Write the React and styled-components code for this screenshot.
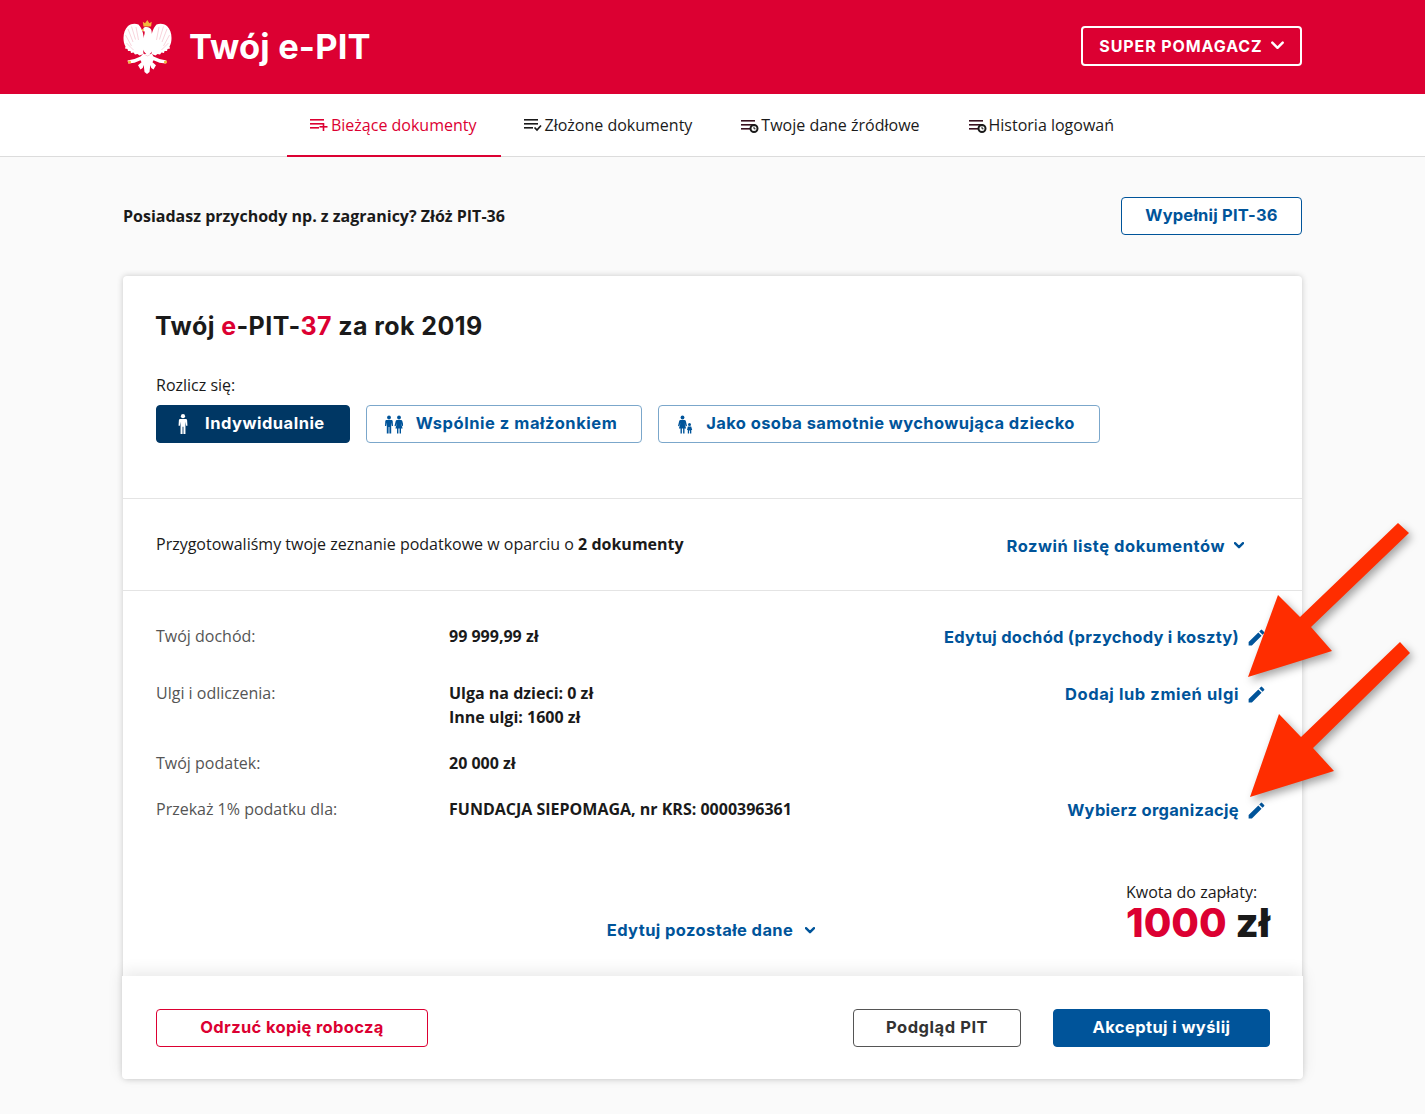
import React from "react";
import styled, { createGlobalStyle } from "styled-components";
import { MdEdit } from "react-icons/md";

const Global = createGlobalStyle`
  html, body { margin: 0; padding: 0; background: #fafafa; }
  body { font-family: "Open Sans", "Liberation Sans", sans-serif; color: #1a1a1a; font-size: 16px; }
  * { box-sizing: border-box; }
`;
const HEAD = `"Inter", "Liberation Sans", sans-serif`;
const BLUE = "#00549a";
const RED = "#dc0032";

const Page = styled.div`position: relative; width: 1425px; height: 1114px; overflow: hidden;`;
const Header = styled.header`
  height: 94px; background: ${RED}; padding: 0 123px;
  display: flex; align-items: center; justify-content: space-between;
`;
const Brand = styled.div`display: flex; align-items: center; gap: 16px;`;
const BrandName = styled.div`
  font-family: ${HEAD}; font-weight: 700; font-size: 34.5px; letter-spacing: .15px; color: #fff; line-height: 1;
`;
const UserButton = styled.button`
  width: 221px; height: 40px; margin-top: -2px; border: 2px solid #fff; border-radius: 4px; background: transparent; color: #fff;
  font-family: ${HEAD}; font-weight: 700; font-size: 16px; letter-spacing: .9px; display: flex; align-items: center; justify-content: center; gap: 8px; padding: 0;
`;
const Nav = styled.nav`
  height: 63px; background: #fff; border-bottom: 1px solid #dcdcdc;
  display: flex; justify-content: center;
`;
const Tab = styled.a`
  height: 63px; padding: 0 24px 0 23px; display: flex; align-items: center; gap: 2px; font-size: 16px; white-space: nowrap;
  color: ${p => (p.$active ? RED : "#1a1a1a")};
  border-bottom: 2px solid ${p => (p.$active ? RED : "transparent")};
`;
const Main = styled.main`padding: 39px 123px 0;`;
const Notice = styled.div`display: flex; align-items: center; justify-content: space-between; height: 39px; margin-bottom: 41px;`;
const NoticeText = styled.div`font-weight: 700; font-size: 16px;`;
const OutlineButton = styled.button`
  height: 38px; width: 181px; background: #fff; border: 1px solid ${BLUE}; border-radius: 4px; color: ${BLUE};
  font-family: ${HEAD}; font-weight: 700; font-size: 16.5px; letter-spacing: .2px; padding: 0 0 2px;
`;
const Card = styled.section`
  background: #fff; border-radius: 4px; box-shadow: 0 0 6px rgba(0,0,0,.2); height: 803px; display: flex; flex-direction: column;
`;
const Top = styled.div`padding: 33px 33px 0; height: 223px; border-bottom: 1px solid #e4e4e4;`;
const Title = styled.h1`
  margin: 0 0 0 -1px; font-family: ${HEAD}; font-weight: 700; font-size: 25px; letter-spacing: .42px; line-height: 34px; color: #1a1a1a;
  span { color: ${RED}; }
`;
const ChooseLabel = styled.div`margin-top: 30px; line-height: 24px; font-size: 16px;`;
const Choices = styled.div`display: flex; gap: 16px; margin-top: 8px;`;
const Choice = styled.button`
  height: 38px; padding: 0 24px 2px ${p => p.$pad}px; display: flex; align-items: center; gap: ${p => p.$gap}px; border-radius: 4px;
  border: 1px solid ${p => (p.$active ? "#003764" : "#7ba7cb")};
  background: ${p => (p.$active ? "#003764" : "#fff")};
  color: ${p => (p.$active ? "#fff" : BLUE)};
  font-family: ${HEAD}; font-weight: 700; font-size: 16.5px; letter-spacing: ${p => p.$ls}px;
  svg { margin-top: 2px; }
`;
const Docs = styled.div`
  height: 92px; border-bottom: 1px solid #e4e4e4; padding: 0 58px 2px 33px; display: flex; align-items: center; justify-content: space-between;
`;
const LinkText = styled.a`
  font-family: ${HEAD}; font-weight: 700; font-size: 16.5px; letter-spacing: ${p => p.$ls ?? 0.4}px; color: ${BLUE};
  display: inline-flex; align-items: center; gap: ${p => p.$gap || 10}px; white-space: nowrap; line-height: 24px;
`;
const DocsLink = styled(LinkText)`margin-top: 4px;`;
const RowLink = styled(LinkText)`align-self: start; margin: 1px 2px -1px 0; gap: 7px;`;
const Rows = styled.div`padding: 33px 33px 0; flex: 1;`;
const Row = styled.div`
  display: grid; grid-template-columns: 293px 1fr auto; margin-bottom: ${p => p.$after}px; line-height: 24px;
`;
const Label = styled.div`color: #555; font-size: 16px;`;
const Value = styled.div`font-weight: 700; font-size: 16px;`;
const Bottom = styled.div`
  display: grid; grid-template-columns: 1fr auto 1fr; align-items: start; margin-top: 59px;
`;
const CenterLink = styled.div`grid-column: 2; padding-top: 38px; margin-left: -3px; line-height: 24px;`;
const Amount = styled.div`grid-column: 3; justify-self: end; margin-right: -1px;`;
const AmountLabel = styled.div`font-size: 16px; line-height: 24px;`;
const AmountValue = styled.div`
  font-family: ${HEAD}; font-weight: 800; font-size: 40px; line-height: 38px; white-space: nowrap;
  span { color: ${RED}; }
`;
const Footer = styled.div`
  height: 103px; margin: 0 -1px; background: #fff; border-radius: 0 0 4px 4px; padding: 0 33px 0 34px; display: flex; align-items: center; justify-content: space-between;
  box-shadow: 0 -4px 16px rgba(0,0,0,.09); position: relative;
`;
const Danger = styled.button`
  width: 272px; height: 38px; background: #fff; border: 1px solid ${RED}; border-radius: 4px; color: ${RED};
  font-family: ${HEAD}; font-weight: 700; font-size: 16.5px; letter-spacing: .35px; padding: 0 0 2px;
`;
const Actions = styled.div`display: flex; gap: 32px;`;
const Preview = styled.button`
  width: 168px; height: 38px; background: #fff; border: 1px solid #555; border-radius: 4px; color: #333;
  font-family: ${HEAD}; font-weight: 700; font-size: 16.5px; letter-spacing: .55px; padding: 0 0 2px;
`;
const Submit = styled.button`
  width: 217px; height: 38px; background: ${BLUE}; border: 1px solid ${BLUE}; border-radius: 4px; color: #fff;
  font-family: ${HEAD}; font-weight: 700; font-size: 16.5px; letter-spacing: .4px; padding: 0 0 2px;
`;
const Arrows = styled.svg`position: absolute; left: 1230px; top: 510px; overflow: visible; filter: drop-shadow(3px 4px 4px rgba(0,0,0,.35));`;

const Pencil = styled(MdEdit)`color: ${BLUE}; width: 21px; height: 21px; flex: none;`;

const Chevron = ({ size = 10, w = 2.4, color = "currentColor" }) => (
  <svg width={size} height={size * 0.7} viewBox="0 0 10 7" fill="none">
    <path d="M1 1.2 5 5.2 9 1.2" stroke={color} strokeWidth={w} strokeLinecap="round" strokeLinejoin="round" />
  </svg>
);

const Lines = ({ x = 0 }) => (
  <g transform={`translate(${x} 0)`}>
    <rect x="0" y="1" width="14" height="1.6" />
    <rect x="0" y="5" width="14" height="1.6" />
    <rect x="0" y="9" width="9" height="1.6" />
  </g>
);
const IconAdd = () => (
  <svg width="19" height="14" viewBox="0 0 19 14" fill={RED}><Lines /><rect x="9.500" y="8" width="8" height="1.6" /><rect x="12.700" y="5" width="1.6" height="8" /></svg>
);
const IconDone = () => (
  <svg width="19" height="14" viewBox="0 0 19 14" fill="#1a1a1a"><Lines /><path d="M10.5 9.5 13 12l4-4.5" fill="none" stroke="#1a1a1a" strokeWidth="1.7" /></svg>
);
const IconClock = () => (
  <svg width="20" height="14" viewBox="0 0 20 14" fill="#3a1220" style={{ marginTop: 2 }}>
    <Lines x={2} />
    <circle cx="15" cy="9.500" r="3.500" fill="#fff" stroke="#1a1a1a" strokeWidth="2" />
    <path d="M15 7.600v2.200h1.500" fill="none" stroke="#1a1a1a" strokeWidth="1" />
  </svg>
);
const Adult = ({ x = 0, c }) => (
  <g fill={c} transform={`translate(${x} 0)`}>
    <circle cx="4" cy="2" r="1.9" />
    <path d="M1.600 4.400h4.800c.7 0 1.200.5 1.300 1.200l.3 5H6.800L6.200 7v11H4.400v-6.500h-.8V18H1.800V7l-.6 3.600H0l.3-5c.1-.7.6-1.200 1.300-1.200z" />
  </g>
);
const Woman = ({ x = 0, c }) => (
  <g fill={c} transform={`translate(${x} 0)`}>
    <circle cx="4" cy="2" r="1.9" />
    <path d="M2 4.400h4c.7 0 1.100.4 1.300 1l1.200 5-1.100.3L6 7.400 7.600 13H6v5H4.600v-5H3.400v5H2v-5H.4L2 7.400.6 10.700l-1.100-.3 1.200-5c.2-.6.600-1 1.300-1z" />
  </g>
);
const IconSingle = () => (
  <svg width="10" height="20" viewBox="0 0 8 18"><Adult c="#fff" /></svg>
);
const IconCouple = () => (
  <svg width="18" height="19" viewBox="0 0 18 18"><Adult c={BLUE} /><Woman x={10} c={BLUE} /></svg>
);
const IconParent = () => (
  <svg width="15" height="19" viewBox="0 0 15 18">
    <Woman x={0.5} c={BLUE} />
    <g fill={BLUE}>
      <circle cx="11.500" cy="9" r="1.500" />
      <path d="M9.800 11h3.400l1 3.500h-.9V18h-1.300v-3h-.9v3H9.800v-3.500H9z" />
    </g>
  </svg>
);

const Wing = () => (
  <>
    <path fill="#fff" d="M20.500 20c.5-5-1-11-5-15.500C12 3 8 3.500 5 6 2 9 .5 13 .5 18c0 3 .5 6 2 8.500l-.5 2 2.500.5.500 2 2.500 0 .5 2 2.500-.5 1.500 2 2.500-.5 2 1.500 4-1.500-.5-7z" />
    <path fill="none" stroke="#f3b7c4" strokeWidth=".6" d="M5 9l5 13M8.500 6.500l4 13M2.500 15l6 11M3.500 23l7 7M13 7l2.500 13" />
  </>
);
const Eagle = () => (
  <svg width="50" height="55" viewBox="0 0 50 55">
    <path d="M20.500 6.500 19.800 1.800l2.200 1.400L24.300 0l2.100 3.200 2.300-1.400-.6 4.700z" fill="#f2b83c" />
    <Wing />
    <g transform="translate(49 0) scale(-1 1)"><Wing /></g>
    <g fill="#fff">
      <path d="M21 7.500c3-1.200 7 0 7.500 3 .2 2 .3 4 1.500 6.500 1.500 3 1.500 7 .5 11-.7 3-2.500 5.500-5.500 7-3-1.500-4.800-4-5.500-7-1-4-.5-8 1-11 1-2 1.200-3.500 1.200-5.500l-2.800-.8z" />
      <path d="M20 34h9l1.500 2.500 6 2.500 7 1.500-.8 3-6.200-.8-6-2.500-1 2 3.500 3-2.500 4.200-2.200-1.400-1-3-.8 7-2.500 2-2.500-2-.8-7-1 3-2.200 1.400-2.500-4.200 3.500-3-1-2-6 2.500-6.200.8-.8-3 7-1.500 6-2.500z" />
    </g>
    <path d="M20.800 9l-3 .6 2.800 1.800z" fill="#f2b83c" />
    <path d="M20.500 33.500c1.500 1.300 3 2 4 2.500 1-.5 2.500-1.200 4-2.500" fill="none" stroke="#f3b7c4" strokeWidth=".6" />
    <circle cx="6.500" cy="42" r="1.600" fill="#f2b83c" />
    <circle cx="42.500" cy="42" r="1.600" fill="#f2b83c" />
  </svg>
);

export default function App() {
  return (
    <Page>
      <Global />
      <Header>
        <Brand><Eagle /><BrandName>Twój e-PIT</BrandName></Brand>
        <UserButton>SUPER POMAGACZ <Chevron size={13} w={1.900} /></UserButton>
      </Header>
      <Nav>
        <Tab $active><IconAdd />Bieżące dokumenty</Tab>
        <Tab><IconDone />Złożone dokumenty</Tab>
        <Tab><IconClock />Twoje dane źródłowe</Tab>
        <Tab><IconClock />Historia logowań</Tab>
      </Nav>
      <Main>
        <Notice>
          <NoticeText>Posiadasz przychody np. z zagranicy? Złóż PIT-36</NoticeText>
          <OutlineButton>Wypełnij PIT-36</OutlineButton>
        </Notice>
        <Card>
          <Top>
            <Title>Twój <span>e</span>-PIT-<span>37</span> za rok 2019</Title>
            <ChooseLabel>Rozlicz się:</ChooseLabel>
            <Choices>
              <Choice $active $pad={21} $gap={17} $ls={0.5}><IconSingle />Indywidualnie</Choice>
              <Choice $pad={18} $gap={13} $ls={0.54}><IconCouple />Wspólnie z małżonkiem</Choice>
              <Choice $pad={19} $gap={13} $ls={0.4}><IconParent />Jako osoba samotnie wychowująca dziecko</Choice>
            </Choices>
          </Top>
          <Docs>
            <div>Przygotowaliśmy twoje zeznanie podatkowe w oparciu o <b>2 dokumenty</b></div>
            <DocsLink $gap={9} $ls={0.56}>Rozwiń listę dokumentów <Chevron /></DocsLink>
          </Docs>
          <Rows>
            <Row $after={33}>
              <Label>Twój dochód:</Label>
              <Value>99 999,99 zł</Value>
              <RowLink $ls={0.25}>Edytuj dochód (przychody i koszty) <Pencil /></RowLink>
            </Row>
            <Row $after={22}>
              <Label>Ulgi i odliczenia:</Label>
              <Value>Ulga na dzieci: 0 zł<br />Inne ulgi: 1600 zł</Value>
              <RowLink $ls={0.6}>Dodaj lub zmień ulgi <Pencil /></RowLink>
            </Row>
            <Row $after={22}>
              <Label>Twój podatek:</Label>
              <Value>20 000 zł</Value>
              <span />
            </Row>
            <Row $after={0}>
              <Label>Przekaż 1% podatku dla:</Label>
              <Value>FUNDACJA SIEPOMAGA, nr KRS: 0000396361</Value>
              <RowLink $ls={0.3}>Wybierz organizację <Pencil /></RowLink>
            </Row>
            <Bottom>
              <CenterLink><LinkText $gap={12}>Edytuj pozostałe dane <Chevron /></LinkText></CenterLink>
              <Amount>
                <AmountLabel>Kwota do zapłaty:</AmountLabel>
                <AmountValue><span>1000</span> zł</AmountValue>
              </Amount>
            </Bottom>
          </Rows>
          <Footer>
            <Danger>Odrzuć kopię roboczą</Danger>
            <Actions>
              <Preview>Podgląd PIT</Preview>
              <Submit>Akceptuj i wyślij</Submit>
            </Actions>
          </Footer>
        </Card>
      </Main>
      <Arrows width="190" height="300" viewBox="0 0 190 300" fill="#ff2d00">
        <path d="M168 13 179 23 81 117 102 141 18 167 48 85 70 107z" />
        <path d="M170 132 180 143 83 238 104 261 20 287 49 204 71 227z" />
      </Arrows>
    </Page>
  );
}
